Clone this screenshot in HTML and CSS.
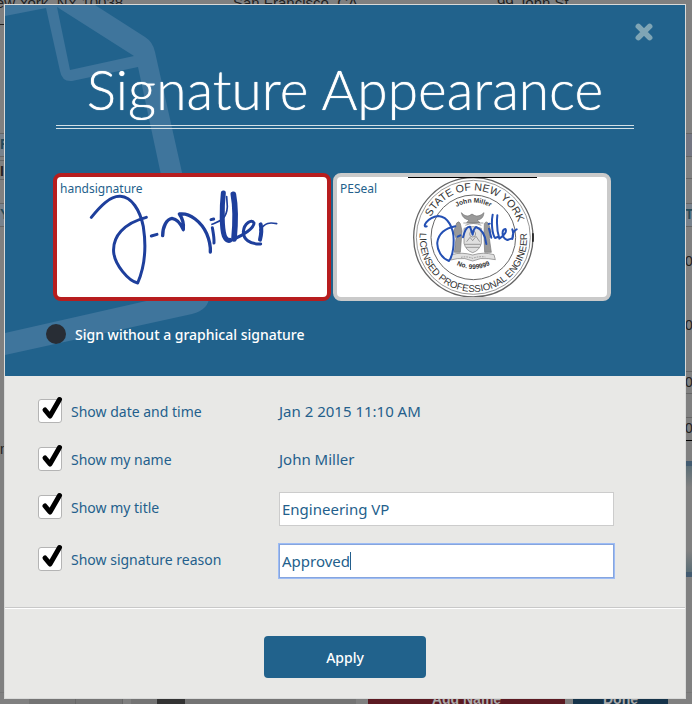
FILE: index.html
```html
<!DOCTYPE html>
<html lang="en">
<head>
<meta charset="utf-8">
<meta name="viewport" content="width=device-width, initial-scale=1">
<title>Signature Appearance</title>
<link rel="stylesheet" href="styles.css">
</head>
<body>
<div class="stage">
  <div class="page">
    <div class="addresses">
      <span>New York, NY 10038</span>
      <span>San Francisco, CA</span>
      <span>99 John St.</span>
    </div>
    <div class="sheet">
      <div class="edge edge-left">
        <i class="cell cell-dark"></i>
        <b class="cell cell-tint cell-first">F</b>
        <b class="cell cell-name">IE</b>
        <b class="cell cell-tint cell-gap">Y</b>
        <span class="note">m</span>
      </div>
      <div class="edge edge-right">
        <i class="cell cell-head"></i>
        <i class="cell cell-line"></i>
        <b class="cell cell-tint cell-total">T</b>
        <span class="digit">0</span>
        <span class="digit digit-low">0</span>
        <span class="cell cell-sum">0</span>
        <span class="cell cell-sum cell-last">0</span>
        <i class="signbox"></i>
      </div>
    </div>
    <div class="toolbar">
      <i class="tool"></i><i class="tool"></i>
      <span class="pager"><i></i></span>
      <span class="action action-red">Add Name</span>
      <span class="action action-blue">Done</span>
    </div>
  </div>

  <form class="dialog" role="dialog" aria-labelledby="title">
    <header class="top">
      <svg class="watermark" viewBox="5 5 210 360" aria-hidden="true">
        <path fill-rule="evenodd" d="M5 5H95L145 37Q153 42 155 52L209 293Q211 309 192 314L5 355V333L186 292L138 67L72 81Q62 82 60 71L46 8L5 16ZM57 7L134 56L70 70Z"/>
      </svg>
      <button class="close" type="button" aria-label="Close">
        <svg viewBox="0 0 16 16"><path d="M3 3L13 13M13 3L3 13"/></svg>
      </button>
      <h1 id="title">Signature Appearance</h1>
      <div class="cards">
        <label class="card">
          <input type="radio" name="signature" checked>
          <span class="card-name">handsignature</span>
          <svg class="card-art" viewBox="21 36 810 360" aria-hidden="true">
            <g class="ink">
              <path stroke-width="9" d="M124 157C150 125 180 92 211 94C245 96 270 135 280 185C290 250 282 310 263 354C235 348 195 300 191 262C187 215 222 174 289 157"/>
              <path stroke-width="9" d="M304 213L321 208"/>
              <path stroke-width="10" d="M338 212C338 185 350 162 366 160C382 162 394 180 400 194C402 175 396 158 388 147C420 142 455 172 470 206C478 225 482 245 481 261"/>
              <path stroke-width="9" d="M487 188C490 205 493 220 492 234M483 164L491 162"/>
              <path stroke-width="5" d="M486 178C505 170 530 165 532 125L530 95"/>
              <path stroke-width="15" d="M520 84C515 130 515 190 523 213Q530 228 539 226"/>
              <path stroke-width="17" d="M550 88C556 120 558 160 552 222"/>
              <path stroke-width="9" d="M552 222C580 210 612 190 612 174C606 160 582 175 580 200C580 222 598 238 632 237"/>
              <path stroke-width="12" d="M632 178C636 195 633 212 630 224"/>
              <path stroke-width="5" d="M630 195C645 172 660 172 680 176"/>
            </g>
          </svg>
        </label>
        <label class="card">
          <input type="radio" name="signature">
          <span class="card-name">PESeal</span>
          <svg class="card-art seal" viewBox="21 36 810 360" aria-hidden="true">
            <defs>
              <path id="arc-top" d="M289 217A141 141 0 0 1 571 217"/>
              <path id="arc-bottom" d="M273 184A161 161 0 1 0 587 184"/>
              <path id="arc-name" d="M326 217A104 104 0 0 1 534 217"/>
              <path id="arc-number" d="M322 232A113 113 0 0 0 538 232"/>
            </defs>
            <g class="rings">
              <circle cx="430" cy="217" r="179" stroke-width="4"/>
              <circle cx="430" cy="217" r="171" stroke-width="2"/>
              <circle cx="430" cy="217" r="127" stroke-width="3"/>
            </g>
            <path class="bar" d="M234 37H621M609 205V230"/>
            <g class="legend">
              <text class="large"><textPath href="#arc-top" startOffset="52%">STATE OF NEW YORK</textPath></text>
              <text><textPath href="#arc-bottom" startOffset="50%">LICENSED PROFESSIONAL ENGINEER</textPath></text>
              <text class="small"><textPath href="#arc-name" startOffset="50%">John Miller</textPath></text>
              <text class="small"><textPath href="#arc-number" startOffset="50%">No. 999999</textPath></text>
            </g>
            <g class="arms">
              <path class="solid" d="M394 143Q408 158 420 151Q426 143 432 151Q446 158 462 143Q460 164 441 165L450 173H410L417 165Q398 162 394 143Z"/>
              <path d="M400 174H460M406 181Q430 170 454 181"/>
              <path class="pale" d="M402 190Q428 180 454 190V235Q448 257 428 263Q408 257 402 235Z"/>
              <path d="M404 238H452M408 247H447M410 230L420 217L428 227L438 214L449 230"/>
              <circle cx="428" cy="207" r="9"/>
              <path class="solid" d="M380 174Q387 166 391 176L396 198L391 262H373L378 220L371 200ZM463 176Q469 166 476 176L483 200L478 220L484 262H464L462 220Z"/>
              <path class="pale" d="M365 269Q395 260 428 270Q460 260 492 269L496 284L475 281Q452 277 428 288Q404 277 382 281L362 285Z"/>
              <path stroke-dasharray="5 3" d="M393 277Q410 273 428 280Q446 273 466 276"/>
            </g>
            <g class="ink ink-bright">
              <path stroke-width="6" d="M290 184C275 190 290 157 325 153C355 155 371 190 371 225C371 255 366 275 357 288C335 280 320 255 322 232C326 206 345 190 376 184"/>
              <path stroke-width="6" d="M383 215L391 211M399 217C404 196 412 184 420 185L428 209Q430 193 438 186C455 192 466 210 469 237"/>
              <path stroke-width="6" d="M477 191L484 218M476 177L479 176M488 149C483 175 487 208 495 219L503 216M502 151C499 180 503 205 508 221C525 210 531 198 526 192C516 193 512 218 532 225L544 221M547 193Q552 207 547 222Q548 197 560 193"/>
            </g>
          </svg>
        </label>
      </div>
      <label class="plain">
        <input type="radio" name="signature">
        <span>Sign without a graphical signature</span>
      </label>
    </header>

    <div class="options">
      <div class="row">
        <label class="check">
          <span class="box"><input type="checkbox" checked><svg viewBox="0 0 24 26" aria-hidden="true"><path d="M7 13L12 19L21.500 2.500"/></svg></span>
          <span>Show date and time</span>
        </label>
        <span class="value">Jan 2 2015 11:10 AM</span>
      </div>
      <div class="row">
        <label class="check">
          <span class="box"><input type="checkbox" checked><svg viewBox="0 0 24 26" aria-hidden="true"><path d="M7 13L12 19L21.500 2.500"/></svg></span>
          <span>Show my name</span>
        </label>
        <span class="value">John Miller</span>
      </div>
      <div class="row">
        <label class="check">
          <span class="box"><input type="checkbox" checked><svg viewBox="0 0 24 26" aria-hidden="true"><path d="M7 13L12 19L21.500 2.500"/></svg></span>
          <span>Show my title</span>
        </label>
        <input class="field" type="text" value="Engineering VP" aria-label="Title">
      </div>
      <div class="row">
        <label class="check">
          <span class="box"><input type="checkbox" checked><svg viewBox="0 0 24 26" aria-hidden="true"><path d="M7 13L12 19L21.500 2.500"/></svg></span>
          <span>Show signature reason</span>
        </label>
        <div class="field-wrap">
          <input class="field field-active" type="text" value="Approved" aria-label="Signature reason">
          <span class="caret"></span>
        </div>
      </div>
    </div>

    <footer class="actions">
      <button class="apply" type="submit">Apply</button>
    </footer>
  </form>
</div>
</body>
</html>
```
FILE: styles.css
```css
*,
*::before,
*::after { box-sizing: border-box; }

body {
  margin: 0;
  background: #808080;
  color: #245f8c;
  font-family: "Trebuchet MS", "Noto Sans", sans-serif;
  font-size: 14px;
}

.stage {
  display: grid;
  min-height: 100vh;
  overflow: hidden;
}

.page,
.dialog {
  grid-area: 1 / 1;
  min-width: 0;
}

/* Document behind the dialog */
.page {
  display: flex;
  flex-direction: column;
  color: #222;
  font-family: "Liberation Sans", sans-serif;
  overflow: hidden;
}

.addresses {
  display: grid;
  grid-template-columns: 248px 264px 1fr;
  height: 16px;
  margin: -5px 0 0 -15px;
  font-size: 15px;
  line-height: 16px;
  white-space: nowrap;
}

.sheet {
  display: flex;
  justify-content: space-between;
  flex: 1;
}

.edge {
  display: flex;
  flex-direction: column;
  width: 8px;
  overflow: hidden;
}

.edge > * { flex: none; }

.cell {
  height: 20px;
  border: solid #666;
  border-width: 1px 0;
  line-height: 20px;
}

.cell-tint { height: 24px; background: #78828c; color: #264a58; }
.cell-dark { height: 14px; border-width: 0 0 1px; border-color: #222; }
.cell-first { margin-top: 108px; }
.cell-name { margin-top: 3px; }
.cell-gap { margin-top: 23px; }
.note { margin-top: 214px; }
.cell-head { height: 24px; margin-top: 122px; background: #747682; }
.cell-line { height: 22px; border-top: 0; }
.cell-total { margin-top: 24px; }
.digit { margin-top: 24px; line-height: 20px; }
.digit-low { margin-top: 44px; }
.cell-sum { height: 23px; margin-top: 36px; }
.cell-last { height: 24px; margin-top: 23px; border-bottom: 1px solid #000; }
.signbox {
  height: 116px;
  margin-top: 20px;
  border: solid #435b70;
  border-width: 5px 0;
  background: linear-gradient(#5c6e76, #808080 20%, #808080 80%, #5c6e76);
}
.edge-right { width: 7px; }

.toolbar {
  display: flex;
  height: 12px;
  padding-left: 29px;
  border-top: 1px solid #777;
  overflow: hidden;
  color: #a8a8a8;
  font-weight: bold;
}

.tool { width: 47px; background: #747474; border-right: 1px solid #666; }
.pager { width: 225px; margin-left: 8px; padding-left: 26px; background: #747474; }
.pager i { display: block; width: 28px; height: 12px; background: #333; }
.action { line-height: 12px; text-align: center; }
.action-red { width: 197px; margin-left: 12px; background: #5c1a22; }
.action-blue { width: 95px; margin-left: 8px; background: #15334a; }

/* Dialog */
.dialog {
  position: relative;
  align-self: start;
  margin: 4px 6px 4px 4px;
  border: 1px solid #d9dad9;
  background: #e8e8e6;
}

.top {
  position: relative;
  padding: 56px 48px 31px;
  background: #21628c;
}

.watermark {
  position: absolute;
  top: 0;
  left: 0;
  width: 210px;
  height: 360px;
  fill: #3f759c;
}

.close {
  position: absolute;
  top: 18px;
  right: 32px;
  width: 18px;
  height: 18px;
  padding: 0;
  border: 0;
  background: none;
}

.close svg { display: block; stroke: #7fa5b5; stroke-width: 5; stroke-linecap: round; }

h1 {
  position: relative;
  margin: 0 3px;
  color: #fff;
  font-family: Lato, sans-serif;
  font-size: 55px;
  font-weight: 300;
  line-height: 56px;
  text-align: center;
  text-shadow: 0 0 1px #fff;
}

h1::after {
  content: "";
  display: block;
  height: 4px;
  margin-top: 8px;
  border: solid #d3e0e6;
  border-width: 1px 0;
}

.cards {
  position: relative;
  display: grid;
  grid-template-columns: repeat(2, minmax(0, 278px));
  gap: 2px;
  margin-top: 44px;
}

.card {
  position: relative;
  height: 128px;
  border: 4px solid #cacaca;
  border-radius: 8px;
  background: #fff;
  overflow: hidden;
}

.card:has(:checked) { border-color: #b71d1e; }
.card input { position: absolute; opacity: 0; }

.card-name {
  position: absolute;
  top: 4px;
  left: 3px;
  font-size: 12px;
  line-height: 16px;
}

.card-art { display: block; width: 100%; height: 120px; }

.ink {
  fill: none;
  stroke: #1e3f9c;
  stroke-linecap: round;
  stroke-linejoin: round;
}

.ink-bright { stroke: #2450b4; }
.rings { fill: none; stroke: #666; }
.bar { stroke: #000; stroke-width: 4; }

.legend {
  fill: #333;
  font-family: "Liberation Sans", sans-serif;
  font-size: 29px;
  text-anchor: middle;
}

.legend .large { font-size: 32px; }
.legend .small { font-size: 20px; font-weight: bold; }
.arms { fill: none; stroke: #777; stroke-width: 2; }
.arms .solid { fill: #999; }
.arms .pale { fill: #e0e0e0; }

.plain {
  position: relative;
  display: flex;
  align-items: center;
  gap: 9px;
  width: max-content;
  height: 22px;
  margin: 22px 0 0 -7px;
  color: #fff;
  font-weight: 500;
}

.plain input {
  appearance: none;
  width: 20px;
  height: 20px;
  margin: 0;
  border-radius: 50%;
  background: #282d35;
}

.options {
  display: flex;
  flex-direction: column;
  gap: 18px;
  padding: 20px 33px 29px;
}

.row {
  display: grid;
  grid-template-columns: 241px minmax(0, 335px);
  align-items: start;
  min-height: 30px;
}

.check {
  display: flex;
  align-items: center;
  gap: 9px;
  height: 24px;
  margin-top: 3px;
}

.box { position: relative; width: 24px; height: 24px; }

.box input {
  appearance: none;
  display: block;
  width: 24px;
  height: 24px;
  margin: 0;
  border: 1px solid #b4b4b4;
  border-radius: 3px;
  background: #fff;
}

.box svg {
  position: absolute;
  bottom: 0;
  left: 0;
  width: 24px;
  height: 26px;
  overflow: visible;
  fill: none;
  stroke: #000;
  stroke-width: 5;
  stroke-linecap: round;
  stroke-linejoin: round;
  pointer-events: none;
}

.value { font-size: 15px; line-height: 30px; }

.field {
  display: block;
  width: 100%;
  height: 34px;
  padding: 0 2px;
  border: 1px solid #ccc;
  background: #fff;
  color: inherit;
  font: inherit;
  font-size: 15px;
}

.field-wrap { position: relative; }
.field-active { border-color: #86a5de; outline: 1px solid #9dbcf5; }

.caret {
  position: absolute;
  top: 8px;
  left: 71px;
  width: 1px;
  height: 18px;
  background: #245f8c;
}

.actions {
  padding: 28px 0 20px;
  border-top: 1px solid #c8c8c8;
  box-shadow: inset 0 1px #fff;
  text-align: center;
}

.apply {
  width: 162px;
  height: 42px;
  border: 0;
  border-radius: 4px;
  background: #21628c;
  color: #fff;
  font: inherit;
  font-weight: 500;
}
```
